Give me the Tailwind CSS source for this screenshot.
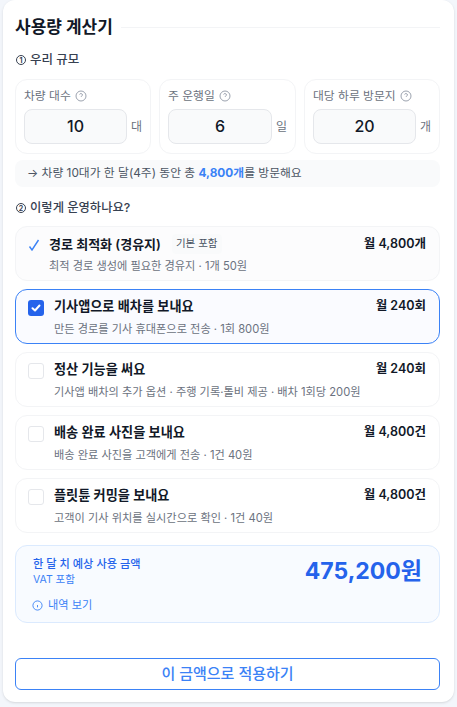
<!DOCTYPE html>
<html lang="ko">
<head>
    <meta charset="UTF-8">
    <meta name="viewport" content="width=device-width, initial-scale=1.0">
    <title>사용량 계산기</title>
    <script src="https://cdn.jsdelivr.net/npm/@tailwindcss/browser@4"></script>
</head>
<body class="bg-[#f3f6fb] h-[707px] overflow-hidden font-['Inter','Noto_Sans_CJK_KR',sans-serif] text-[#111827]">
    <div class="mx-[3px] h-[702px] bg-white rounded-xl pl-3 pr-[14px] pt-[15px] shadow-sm">
        <!-- Header -->
        <div class="flex items-center gap-2 h-6">
            <h1 class="text-[17px] font-bold leading-6 whitespace-nowrap">사용량 계산기</h1>
            <div class="flex-1 h-px bg-[#f3f4f6]"></div>
        </div>

        <!-- Section 1 -->
        <div class="mt-[11px] h-[20px] pl-px flex items-center gap-1 text-[#374151]">
            <span class="inline-flex w-[10px] h-[10px] rounded-full border border-[#374151] items-center justify-center text-[7px] font-bold leading-none">1</span>
            <span class="text-[12.5px] font-medium">우리 규모</span>
        </div>
        <div class="mt-[9px] grid grid-cols-[136px_137px_136px] gap-2">
            <div class="h-[75px] rounded-xl border border-[#f3f4f6] px-2 pt-[6px]">
                <div class="flex items-center gap-1 text-[11.8px] leading-[20px] text-[#6b7280]"><span>차량 대수</span>
                    <svg class="w-3 h-3 text-[#9ca3af]" viewBox="0 0 24 24" fill="none" stroke="currentColor" stroke-width="2"><circle cx="12" cy="12" r="10"/><path d="M9.1 9a3 3 0 0 1 5.8 1c0 2-3 2.5-3 4"/><path d="M12 17.5h.01"/></svg>
                </div>
                <div class="mt-[3px] flex items-center gap-[4px]">
                    <div class="w-[104px] h-[35px] pb-[2px] rounded-lg border border-[#e5e7eb] bg-[#f9fafb] flex items-center justify-center text-[16px] font-medium">10</div>
                    <span class="text-[12px] text-[#6b7280]">대</span>
                </div>
            </div>
            <div class="h-[75px] rounded-xl border border-[#f3f4f6] px-2 pt-[6px]">
                <div class="flex items-center gap-1 text-[11.8px] leading-[20px] text-[#6b7280]"><span>주 운행일</span>
                    <svg class="w-3 h-3 text-[#9ca3af]" viewBox="0 0 24 24" fill="none" stroke="currentColor" stroke-width="2"><circle cx="12" cy="12" r="10"/><path d="M9.1 9a3 3 0 0 1 5.8 1c0 2-3 2.5-3 4"/><path d="M12 17.5h.01"/></svg>
                </div>
                <div class="mt-[3px] flex items-center gap-[4px]">
                    <div class="w-[104px] h-[35px] pb-[2px] rounded-lg border border-[#e5e7eb] bg-[#f9fafb] flex items-center justify-center text-[16px] font-medium">6</div>
                    <span class="text-[12px] text-[#6b7280]">일</span>
                </div>
            </div>
            <div class="h-[75px] rounded-xl border border-[#f3f4f6] px-2 pt-[6px]">
                <div class="flex items-center gap-1 text-[11.8px] leading-[20px] text-[#6b7280]"><span>대당 하루 방문지</span>
                    <svg class="w-3 h-3 text-[#9ca3af]" viewBox="0 0 24 24" fill="none" stroke="currentColor" stroke-width="2"><circle cx="12" cy="12" r="10"/><path d="M9.1 9a3 3 0 0 1 5.8 1c0 2-3 2.5-3 4"/><path d="M12 17.5h.01"/></svg>
                </div>
                <div class="mt-[3px] flex items-center gap-[4px]">
                    <div class="w-[103px] h-[35px] pb-[2px] rounded-lg border border-[#e5e7eb] bg-[#f9fafb] flex items-center justify-center text-[16px] font-medium">20</div>
                    <span class="text-[12px] text-[#6b7280]">개</span>
                </div>
            </div>
        </div>
        <div class="mt-[6px] h-[27px] rounded-lg bg-[#f9fafb] pl-3 flex items-center text-[11.8px] text-[#4b5563] whitespace-pre">→ 차량 10대가 한 달(4주) 동안 총 <span class="font-bold text-[#3b82f6]">4,800개</span>를 방문해요</div>

        <!-- Section 2 -->
        <div class="mt-[11px] h-[20px] pl-px flex items-center gap-1 text-[#374151]">
            <span class="inline-flex w-[10px] h-[10px] rounded-full border border-[#374151] items-center justify-center text-[7px] font-bold leading-none">2</span>
            <span class="text-[12.3px] font-medium">이렇게 운영하나요?</span>
        </div>

        <div class="mt-[8px] flex flex-col gap-2">
            <div class="h-[55px] rounded-xl border border-[#f3f4f6] bg-[#fcfcfd] pl-[12px] pr-[13px] flex">
                <svg class="w-[12px] h-[12px] mt-[12px] shrink-0 text-[#3b82f6]" viewBox="0 0 12 12" fill="none" stroke="currentColor" stroke-width="1.4"><path d="M1.5 7.5 4 11 10.5 1"/></svg>
                <div class="ml-[9px] flex-1">
                    <div class="mt-[7px] flex items-center text-[13px] font-semibold leading-[20px]">경로 최적화 (경유지)<span class="ml-[11px] px-[4px] rounded bg-[#f9fafb] text-[10.5px] font-normal text-[#4b5563]">기본 포함</span></div>
                    <div class="mt-[4px] text-[11.2px] leading-[16px] text-[#6b7280]">최적 경로 생성에 필요한 경유지 · 1개 50원</div>
                </div>
                <div class="mt-[7px] text-[12.5px] font-semibold leading-[20px]">월 4,800개</div>
            </div>

            <div class="h-[55px] rounded-xl border border-[#3b82f6] bg-[#fafbff] pl-[12px] pr-[13px] flex">
                <div class="w-4 h-4 mt-[10px] shrink-0 rounded-[3px] bg-[#2563eb] flex items-center justify-center">
                    <svg class="w-[12px] h-[12px] text-white" viewBox="0 0 24 24" fill="none" stroke="currentColor" stroke-width="4" stroke-linecap="round" stroke-linejoin="round"><path d="M5 12.5 10 17 19 7"/></svg>
                </div>
                <div class="ml-[10px] flex-1">
                    <div class="mt-[6px] text-[13.15px] font-semibold leading-[20px]">기사앱으로 배차를 보내요</div>
                    <div class="mt-[5px] text-[11.2px] leading-[16px] text-[#6b7280]">만든 경로를 기사 휴대폰으로 전송 · 1회 800원</div>
                </div>
                <div class="mt-[6px] text-[12.5px] font-semibold leading-[20px]">월 240회</div>
            </div>

            <div class="h-[55px] rounded-xl border border-[#f3f4f6] pl-[12px] pr-[13px] flex">
                <div class="w-4 h-4 mt-[10px] shrink-0 rounded-[3px] border border-[#e5e7eb]"></div>
                <div class="ml-[10px] flex-1">
                    <div class="mt-[6px] text-[13.15px] font-semibold leading-[20px]">정산 기능을 써요</div>
                    <div class="mt-[5px] text-[11.2px] leading-[16px] text-[#6b7280] whitespace-nowrap">기사앱 배차의 추가 옵션 · 주행 기록·톨비 제공 · 배차 1회당 200원</div>
                </div>
                <div class="mt-[6px] text-[12.5px] font-semibold leading-[20px]">월 240회</div>
            </div>

            <div class="h-[55px] rounded-xl border border-[#f3f4f6] pl-[12px] pr-[13px] flex">
                <div class="w-4 h-4 mt-[10px] shrink-0 rounded-[3px] border border-[#e5e7eb]"></div>
                <div class="ml-[10px] flex-1">
                    <div class="mt-[6px] text-[13.15px] font-semibold leading-[20px]">배송 완료 사진을 보내요</div>
                    <div class="mt-[5px] text-[11.2px] leading-[16px] text-[#6b7280]">배송 완료 사진을 고객에게 전송 · 1건 40원</div>
                </div>
                <div class="mt-[6px] text-[12.5px] font-semibold leading-[20px]">월 4,800건</div>
            </div>

            <div class="h-[55px] rounded-xl border border-[#f3f4f6] pl-[12px] pr-[13px] flex">
                <div class="w-4 h-4 mt-[10px] shrink-0 rounded-[3px] border border-[#e5e7eb]"></div>
                <div class="ml-[10px] flex-1">
                    <div class="mt-[6px] text-[13.15px] font-semibold leading-[20px]">플릿튠 커밍을 보내요</div>
                    <div class="mt-[5px] text-[11.2px] leading-[16px] text-[#6b7280]">고객이 기사 위치를 실시간으로 확인 · 1건 40원</div>
                </div>
                <div class="mt-[6px] text-[12.5px] font-semibold leading-[20px]">월 4,800건</div>
            </div>
        </div>

        <!-- Total -->
        <div class="mt-[12px] h-[78px] rounded-xl border border-[#dbeafe] bg-[#f8fbff] pl-[17px] pr-[17px] flex justify-between">
            <div>
                <div class="mt-[9px] text-[11.2px] leading-[18px] font-medium text-[#2563eb]">한 달 치 예상 사용 금액</div>
                <div class="text-[10.5px] leading-[14px] text-[#3b82f6]">VAT 포함</div>
                <div class="mt-[10px] -ml-px flex items-center gap-[5px] text-[11.2px] leading-[16px] text-[#3b82f6]">
                    <svg class="w-[11px] h-[11px]" viewBox="0 0 24 24" fill="none" stroke="currentColor" stroke-width="2"><circle cx="12" cy="12" r="10"/><path d="M12 16v-5"/><path d="M12 8h.01"/></svg>
                    <span>내역 보기</span>
                </div>
            </div>
            <div class="mt-[9px] text-[23px] leading-[32px] font-bold text-[#2563eb]">475,200원</div>
        </div>

        <button class="mt-[35px] w-full h-[32px] rounded-md border border-[#3b82f6] bg-white text-[15px] font-medium text-[#3b82f6]">이 금액으로 적용하기</button>
    </div>
</body>
</html>
